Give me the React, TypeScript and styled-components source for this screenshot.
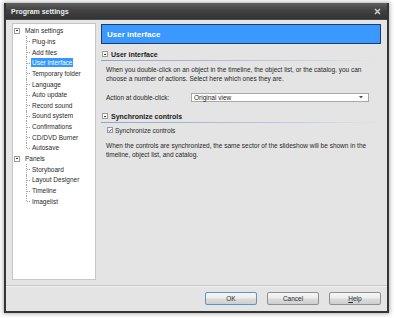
import styled, { createGlobalStyle } from "styled-components";

const GlobalStyle = createGlobalStyle`
  html, body {
    margin: 0;
    padding: 0;
    background: #ffffff;
  }
  body {
    font-family: "Liberation Sans", Arial, sans-serif;
    color: #1c1c1c;
  }
  * {
    box-sizing: border-box;
  }
`;

type TreeItem = {
  label: string;
  level: 0 | 1;
  last?: boolean;
  selected?: boolean;
};

const treeItems: TreeItem[] = [
  { label: "Main settings", level: 0 },
  { label: "Plug-ins", level: 1 },
  { label: "Add files", level: 1 },
  { label: "User interface", level: 1, selected: true },
  { label: "Temporary folder", level: 1 },
  { label: "Language", level: 1 },
  { label: "Auto update", level: 1 },
  { label: "Record sound", level: 1 },
  { label: "Sound system", level: 1 },
  { label: "Confirmations", level: 1 },
  { label: "CD/DVD Burner", level: 1 },
  { label: "Autosave", level: 1, last: true },
  { label: "Panels", level: 0 },
  { label: "Storyboard", level: 1 },
  { label: "Layout Designer", level: 1 },
  { label: "Timeline", level: 1 },
  { label: "Imagelist", level: 1, last: true },
];

export default function App() {
  return (
    <>
      <GlobalStyle />
      <Screen>
        <Window>
          <TitleBar>
            <TitleText>Program settings</TitleText>
            <CloseIcon width="7" height="7" viewBox="0 0 7 7">
              <path d="M1 1 L6 6 M6 1 L1 6" stroke="#cfcfcf" strokeWidth="1.5" />
            </CloseIcon>
          </TitleBar>

          <Body>
            <Tree>
              {treeItems.map((item) => (
                <TreeRow key={item.label} $level={item.level} $last={item.last}>
                  {item.level === 0 && <Expander />}
                  <TreeLabel $selected={item.selected}>{item.label}</TreeLabel>
                </TreeRow>
              ))}
            </Tree>

            <Content>
              <PageHeader>User interface</PageHeader>

              <SectionHead>
                <Expander />
                <SectionTitle>User interface</SectionTitle>
              </SectionHead>
              <SectionLine />
              <Paragraph>
                When you double-click on an object in the timeline, the object list, or the catalog, you can
                <br />
                choose a number of actions. Select here which ones they are.
              </Paragraph>
              <FieldRow>
                <FieldLabel>Action at double-click:</FieldLabel>
                <Select>
                  <span>Original view</span>
                  <svg width="4" height="3" viewBox="0 0 4 3">
                    <path d="M0 0 H4 L2 2.5 Z" fill="#505050" />
                  </svg>
                </Select>
              </FieldRow>

              <SectionHead $gap={9}>
                <Expander />
                <SectionTitle>Synchronize controls</SectionTitle>
              </SectionHead>
              <SectionLine />
              <CheckRow>
                <CheckBox>
                  <svg width="5" height="5" viewBox="0 0 5 5">
                    <path d="M0.6 2.4 L2 3.8 L4.4 0.9" stroke="#2a5fb0" strokeWidth="1.1" fill="none" />
                  </svg>
                </CheckBox>
                <span>Synchronize controls</span>
              </CheckRow>
              <Paragraph $top={6}>
                When the controls are synchronized, the same sector of the slideshow will be shown in the
                <br />
                timeline, object list, and catalog.
              </Paragraph>
            </Content>
          </Body>

          <Footer>
            <Button $default>OK</Button>
            <Button>Cancel</Button>
            <Button>
              <u>H</u>elp
            </Button>
          </Footer>
        </Window>
      </Screen>
    </>
  );
}

const Screen = styled.div`
  width: 394px;
  height: 318px;
  padding: 3px 0 0 4px;
`;

const Window = styled.div`
  width: 385px;
  height: 310px;
  display: flex;
  flex-direction: column;
  background: #e4e4e4;
  border: 2px solid #353535;
  border-top: none;
  box-shadow: 0 0 4px 1px rgba(0, 0, 0, 0.3);
`;

const TitleBar = styled.div`
  height: 17px;
  flex: none;
  display: flex;
  align-items: center;
  justify-content: space-between;
  padding: 0 6px 0 5px;
  background: linear-gradient(#606060, #424242 45%, #333333);
  border-bottom: 1px solid #4a4a4a;
`;

const TitleText = styled.span`
  color: #eeeeee;
  font-size: 7px;
  font-weight: bold;
`;

const CloseIcon = styled.svg`
  display: block;
`;

const Body = styled.div`
  flex: 1;
  display: flex;
  gap: 5px;
  padding: 3px 6px 0 6px;
`;

const Tree = styled.div`
  width: 84px;
  height: 257px;
  flex: none;
  background: #ffffff;
  border: 1px solid #c6c6c6;
  padding-top: 1.4px;
  font-size: 6.5px;
`;

const TreeRow = styled.div<{ $level: number; $last?: boolean }>`
  position: relative;
  height: 10.67px;
  display: flex;
  align-items: center;
  gap: 4px;
  padding-left: ${(p) => (p.$level === 0 ? "1px" : "18px")};

  ${(p) =>
    p.$level === 1 &&
    `
    &::before {
      content: "";
      position: absolute;
      left: 13px;
      top: 0;
      height: ${p.$last ? "50%" : "100%"};
      border-left: 1px dotted #a4a4a4;
    }
    &::after {
      content: "";
      position: absolute;
      left: 14px;
      top: 50%;
      width: 3px;
      border-top: 1px dotted #a4a4a4;
    }
  `}
`;

const Expander = styled.span`
  position: relative;
  width: 6px;
  height: 6px;
  flex: none;
  background: #ffffff;
  border: 1px solid #9a9a9a;

  &::after {
    content: "";
    position: absolute;
    left: 1px;
    right: 1px;
    top: 1.5px;
    height: 1px;
    background: #3a3a3a;
  }
`;

const TreeLabel = styled.span<{ $selected?: boolean }>`
  line-height: 9px;
  padding: 0 1px;
  color: ${(p) => (p.$selected ? "#ffffff" : "#2a2a2a")};
  background: ${(p) => (p.$selected ? "#3399ff" : "transparent")};
  white-space: nowrap;
`;

const Content = styled.div`
  flex: 1;
  display: flex;
  flex-direction: column;
  padding-top: 1px;
`;

const PageHeader = styled.div`
  height: 20px;
  display: flex;
  align-items: center;
  padding-left: 5px;
  background: #3a98ff;
  border: 1px solid #1b3f6c;
  color: #ffffff;
  font-size: 8px;
  font-weight: bold;
`;

const SectionHead = styled.div<{ $gap?: number }>`
  height: 10px;
  margin-top: ${(p) => p.$gap ?? 5}px;
  display: flex;
  align-items: center;
  gap: 3px;
  padding-left: 1px;
`;

const SectionTitle = styled.span`
  font-size: 7px;
  font-weight: bold;
  color: #1a1a1a;
`;

const SectionLine = styled.div`
  height: 1px;
  margin-top: 1px;
  background: linear-gradient(to right, #8ea6c6, #b9c7da 60%, #e4e4e4);
`;

const Paragraph = styled.p<{ $top?: number }>`
  margin: ${(p) => p.$top ?? 3.5}px 0 0;
  padding-left: 5px;
  font-size: 6.5px;
  line-height: 9px;
  white-space: nowrap;
  color: #262626;
`;

const FieldRow = styled.div`
  display: flex;
  align-items: center;
  margin-top: 10.5px;
  padding-left: 5px;
  font-size: 6.5px;
`;

const FieldLabel = styled.span`
  width: 85px;
  flex: none;
  color: #262626;
`;

const Select = styled.div`
  width: 178px;
  height: 9px;
  display: flex;
  align-items: center;
  justify-content: space-between;
  padding: 0 5px 0 2px;
  background: #ffffff;
  border: 1px solid #a8a8a8;
  color: #262626;

  svg {
    display: block;
  }
`;

const CheckRow = styled.div`
  display: flex;
  align-items: center;
  gap: 2px;
  height: 9px;
  margin-top: 2.5px;
  padding-left: 6px;
  font-size: 6.5px;
  color: #262626;
`;

const CheckBox = styled.span`
  width: 6px;
  height: 6px;
  display: flex;
  align-items: center;
  justify-content: center;
  background: #f4f6fa;
  border: 1px solid #8f9aa8;

  svg {
    display: block;
  }
`;

const Footer = styled.div`
  height: 26px;
  flex: none;
  display: flex;
  justify-content: flex-end;
  align-items: flex-start;
  gap: 10px;
  padding: 6px 6px 0 0;
  border-top: 1px solid #c8c8c8;
  box-shadow: inset 0 1px 0 #f2f2f2;
`;

const Button = styled.button<{ $default?: boolean }>`
  width: 52px;
  height: 13px;
  padding: 0;
  font-family: inherit;
  font-size: 6.5px;
  color: #2a2a2a;
  border: 1px solid ${(p) => (p.$default ? "#5f93c4" : "#8f8f8f")};
  border-radius: 2px;
  background: linear-gradient(#f6f6f6, #ececec 48%, #dcdcdc 52%, #cfcfcf);
`;
